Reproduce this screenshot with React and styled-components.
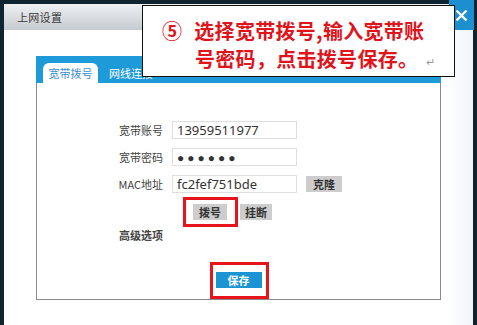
import React from "react";
import styled, { createGlobalStyle } from "styled-components";

const Global = createGlobalStyle`
  html, body { margin: 0; padding: 0; background: #ffffff; overflow: hidden; }
  * { box-sizing: border-box; }
`;

const Frame = styled.div`
  position: relative;
  width: 477px;
  height: 325px;
  background: #0f2330;
  padding: 4px 4px 0 4px;
  display: flex;
  font-family: "Noto Sans CJK SC", "Noto Sans", sans-serif;
`;

const Win = styled.div`
  flex: 1;
  display: flex;
  flex-direction: column;
  background: linear-gradient(to right, #ffffff 0%, #ffffff 94%, #f2f4f6 100%);
`;

const TitleBar = styled.div`
  height: 26px;
  display: flex;
  align-items: center;
  padding-left: 13px;
  background: linear-gradient(#eef0f2, #c6cbd0);
  font-size: 11px;
  color: #3a3a3a;
  letter-spacing: 0.3px;
`;

const Close = styled.div`
  position: absolute;
  top: 0;
  right: 3px;
  width: 25px;
  height: 30px;
  background: #1b8fd0;
  display: flex;
  align-items: center;
  justify-content: center;
`;

const Content = styled.div`
  flex: 1;
  padding: 26px 0 0 32px;
`;

const Panel = styled.div`
  width: 405px;
  height: 244px;
  border: 1px solid #8a8a8a;
  border-top: none;
  display: flex;
  flex-direction: column;
`;

const TabBar = styled.div`
  height: 27px;
  margin: 0 -1px;
  background: #1f9ad8;
  display: flex;
  align-items: flex-end;
  padding-left: 7px;
  gap: 11px;
`;

const Tab = styled.div`
  height: 20px;
  padding: 0 ${p => (p.$active ? "9px" : "0")};
  width: ${p => (p.$active ? "55px" : "auto")};
  border-radius: 6px 6px 0 0;
  background: ${p => (p.$active ? "#ffffff" : "transparent")};
  color: ${p => (p.$active ? "#3b8fd2" : "#ffffff")};
  font-size: 11px;
  display: flex;
  align-items: center;
  justify-content: center;
  white-space: nowrap;
`;

const Body = styled.div`
  flex: 1;
  display: flex;
  flex-direction: column;
  padding-top: 38px;
`;

const Form = styled.div`
  display: grid;
  grid-template-columns: 126px 125px 36px;
  column-gap: 9px;
  row-gap: 9px;
  align-items: center;
`;

const Label = styled.div`
  text-align: right;
  font-size: 11px;
  color: #444;
  font-weight: ${p => (p.$bold ? 700 : 400)};
`;

const Input = styled.div`
  height: 18px;
  border: 1px solid #dedede;
  background: #fff;
  font-family: "Noto Sans", "Open Sans", sans-serif;
  color: #333;
  padding-left: 4px;
  display: flex;
  align-items: center;
  letter-spacing: ${p => (p.$dots ? "3px" : "0")};
  font-size: ${p => (p.$dots ? "12px" : "13px")};
`;

const GrayButton = styled.div`
  position: relative;
  height: 16px;
  width: ${p => p.$w || 34}px;
  background: #cdcdcd;
  color: #333;
  font-size: 11px;
  font-weight: 700;
  display: flex;
  align-items: center;
  justify-content: center;
`;

const ButtonRow = styled.div`
  grid-column: 2 / 4;
  display: flex;
  gap: 13px;
  padding-left: 21px;
  margin-top: 2px;
`;

const Highlight = styled.div`
  position: absolute;
  top: -7px;
  bottom: -7px;
  left: -10px;
  right: -11px;
  border: 3px solid #e8141b;
  pointer-events: none;
`;

const SaveHighlight = styled(Highlight)`
  top: -10px;
  bottom: -11px;
  left: -6px;
  right: -7px;
`;

const AdvRow = styled.div`
  grid-column: 1 / 2;
  margin-top: -2px;
`;

const SaveArea = styled.div`
  flex: 1;
  display: flex;
  justify-content: center;
  padding-top: 29px;
`;

const SaveButton = styled.div`
  position: relative;
  width: 46px;
  height: 16px;
  background: #1a94d2;
  color: #fff;
  font-size: 11px;
  font-weight: 700;
  display: flex;
  align-items: center;
  justify-content: center;
`;

const Callout = styled.div`
  position: absolute;
  left: 142px;
  top: 5px;
  width: 313px;
  height: 72px;
  background: #fff;
  border: 1.5px solid #111;
  color: #e0141b;
  font-weight: 700;
  font-size: 20px;
  line-height: 28px;
  padding: 11px 0 0 19px;
  font-family: "Noto Sans CJK SC", sans-serif;
`;

const Line = styled.div`
  white-space: nowrap;
  padding-left: ${p => p.$indent || 0}px;
  letter-spacing: 0.3px;
`;

const Circle = styled.span`
  display: inline-block;
  margin-right: 12px;
`;

const Ret = styled.span`
  color: #9a9a9a;
  font-size: 11px;
  font-weight: 400;
  margin-left: 8px;
  vertical-align: 1px;
`;

export default function App() {
  return (
    <>
      <Global />
      <Frame>
        <Win>
          <TitleBar>上网设置</TitleBar>
          <Content>
            <Panel>
              <TabBar>
                <Tab $active>宽带拨号</Tab>
                <Tab>网线连接</Tab>
              </TabBar>
              <Body>
                <Form>
                  <Label>宽带账号</Label>
                  <Input>13959511977</Input>
                  <span />
                  <Label>宽带密码</Label>
                  <Input $dots>●●●●●●</Input>
                  <span />
                  <Label>MAC地址</Label>
                  <Input>fc2fef751bde</Input>
                  <GrayButton $w={36}>克隆</GrayButton>
                  <span />
                  <ButtonRow>
                    <GrayButton $w={34}>
                      拨号
                      <Highlight />
                    </GrayButton>
                    <GrayButton $w={32}>挂断</GrayButton>
                  </ButtonRow>
                  <AdvRow>
                    <Label $bold>高级选项</Label>
                  </AdvRow>
                </Form>
                <SaveArea>
                  <SaveButton>
                    保存
                    <SaveHighlight />
                  </SaveButton>
                </SaveArea>
              </Body>
            </Panel>
          </Content>
        </Win>
        <Close>
          <svg width="13" height="13" viewBox="0 0 13 13">
            <path d="M1.5 1.5 L11.5 11.5 M11.5 1.5 L1.5 11.5" stroke="#fff" strokeWidth="2.4" />
          </svg>
        </Close>
        <Callout>
          <Line>
            <Circle>⑤</Circle>选择宽带拨号,输入宽带账
          </Line>
          <Line $indent={33}>
            号密码，点击拨号保存。<Ret>↵</Ret>
          </Line>
        </Callout>
      </Frame>
    </>
  );
}
